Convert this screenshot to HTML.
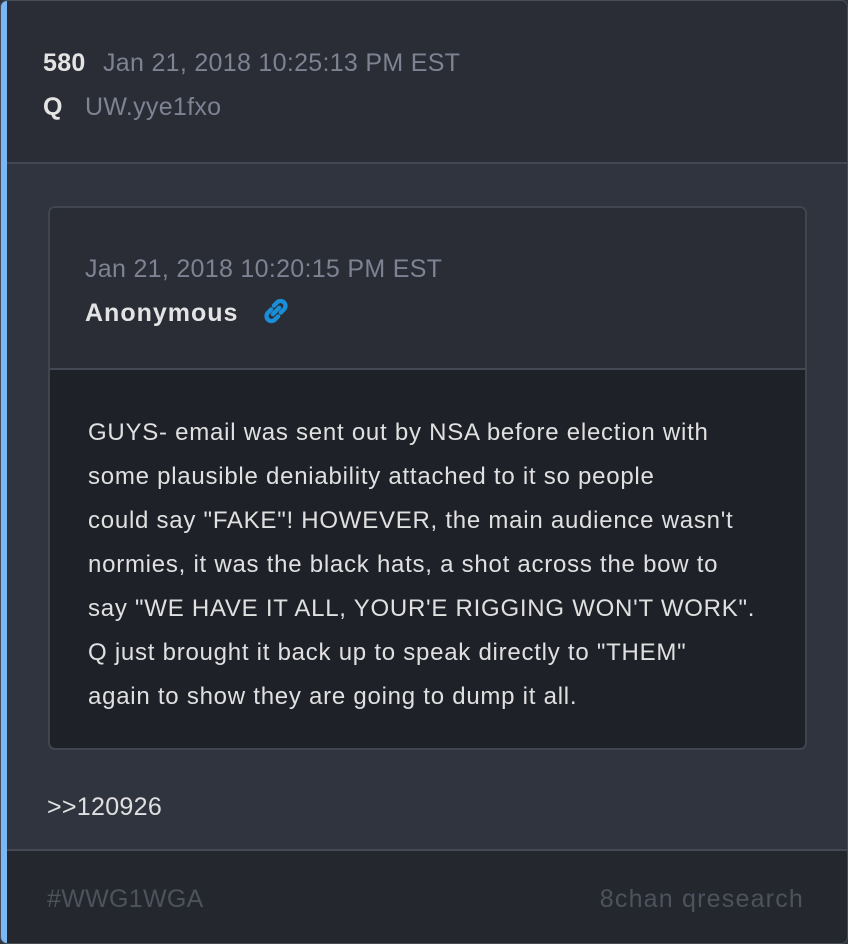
<!DOCTYPE html>
<html><head><meta charset="utf-8"><style>
*{margin:0;padding:0;box-sizing:border-box}
body{width:848px;height:944px;background:#2f343e;font-family:"Liberation Sans",sans-serif;overflow:hidden}
.card{position:absolute;left:0;top:0;width:848px;height:944px;border:1px solid #474c56;border-radius:7px;overflow:hidden;background:#2f343e}
.bar{position:absolute;left:0;top:0;width:6px;height:944px;background:#7ab8f5}
.hdr{position:absolute;left:6px;top:0;right:0;height:163px;background:#2a2d35;border-bottom:2px solid #434852}
.t{position:absolute;white-space:nowrap;font-size:25px;letter-spacing:0.3px}
.inner{position:absolute;left:47px;top:205px;width:759px;height:544px;border:2px solid #40454f;border-radius:7px;overflow:hidden;background:#1f2128}
.ih{position:absolute;left:0;top:0;right:0;height:162px;background:#2a2d35;border-bottom:2px solid #434852}
.body{position:absolute;left:38px;top:203px;font-size:24px;line-height:44px;color:#e0e0e0;white-space:nowrap;letter-spacing:0.75px}
.ftr{position:absolute;left:6px;top:848px;right:0;bottom:0;background:#24272e;border-top:2px solid #434852}
</style></head><body>
<div class="card">
<div class="hdr"></div>
<div class="bar"></div>
<div class="t" style="left:42px;top:48px;color:#e4e4e4;font-weight:bold">580</div>
<div class="t" style="left:102px;top:48px;color:#7e8292">Jan 21, 2018 10:25:13 PM EST</div>
<div class="t" style="left:42px;top:92px;color:#e4e4e4;font-weight:bold">Q</div>
<div class="t" style="left:84px;top:92px;color:#7e8292">UW.yye1fxo</div>
<div class="inner">
<div class="ih"></div>
<div class="t" style="left:35px;top:47px;color:#7e8292">Jan 21, 2018 10:20:15 PM EST</div>
<div class="t" style="left:35px;top:91px;color:#e4e4e4;font-weight:bold;letter-spacing:1px">Anonymous</div>
<svg style="position:absolute;left:211px;top:88px" width="30" height="30" viewBox="0 0 28 28" fill="none" stroke="#1a8fd8" stroke-width="4" stroke-linecap="round"><path d="M12 9l3-3a4.5 4.5 0 0 1 6.5 6.5l-3 3"/><path d="M16 19l-3 3a4.5 4.5 0 0 1-6.5-6.5l3-3"/><path d="M11 17l6-6"/></svg>
<div class="body">GUYS- email was sent out by NSA before election with<br>some plausible deniability attached to it so people<br>could say "FAKE"! HOWEVER, the main audience wasn't<br>normies, it was the black hats, a shot across the bow to<br>say "WE HAVE IT ALL, YOUR'E RIGGING WON'T WORK".<br>Q just brought it back up to speak directly to "THEM"<br>again to show they are going to dump it all.</div>
</div>
<div class="t" style="left:46px;top:792px;color:#e0e0e0">&gt;&gt;120926</div>
<div class="ftr"></div>
<div class="t" style="left:46px;top:884px;color:#4d525d">#WWG1WGA</div>
<div class="t" style="right:43px;top:884px;color:#4d525d;letter-spacing:1.2px">8chan qresearch</div>
</div>
</body></html>
